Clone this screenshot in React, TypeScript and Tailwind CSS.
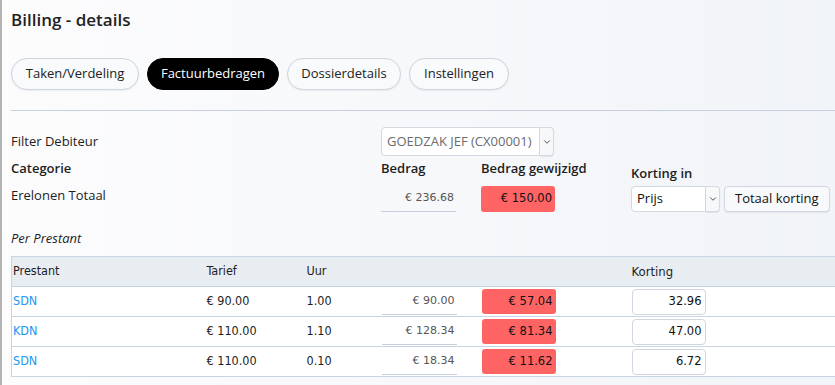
import { ChevronDown } from "lucide-react";

const ui = "font-['Open_Sans',sans-serif]";
const mono = "font-['DejaVu_Sans',sans-serif]";

const tabs = [
  { label: "Taken/Verdeling", w: "w-[128px]" },
  { label: "Factuurbedragen", w: "w-[132px]" },
  { label: "Dossierdetails", w: "w-[114px]" },
  { label: "Instellingen", w: "w-[100px]" },
];

const rows = [
  { who: "SDN", tarief: "€ 90.00", uur: "1.00", bedrag: "€ 90.00", nieuw: "€ 57.04", korting: "32.96" },
  { who: "KDN", tarief: "€ 110.00", uur: "1.10", bedrag: "€ 128.34", nieuw: "€ 81.34", korting: "47.00" },
  { who: "SDN", tarief: "€ 110.00", uur: "0.10", bedrag: "€ 18.34", nieuw: "€ 11.62", korting: "6.72" },
];

const SelectBox = ({ value, className, muted }: { value: string; className?: string; muted?: boolean }) => (
  <div className={`flex h-full ${className ?? ""}`}>
    <div
      className={`flex flex-1 items-center rounded-l-[4px] border border-[#d3d9e1] bg-white pl-[5px] text-[13px] ${
        muted ? "text-[#6b6b6b]" : "text-[#111]"
      }`}
    >
      {value}
    </div>
    <div className="flex w-[14px] items-center justify-center rounded-r-[4px] border border-l-0 border-[#d3d9e1] bg-[#f6f8fa] shadow-[0_1px_1px_rgba(0,0,0,0.08)]">
      <ChevronDown className="size-[10px] text-[#444]" strokeWidth={2.2} />
    </div>
  </div>
);

const AmountField = ({ value, className }: { value: string; className?: string }) => (
  <div
    className={`flex items-center justify-end border-b border-[#c6d0dc] pr-[2px] text-[11px] text-[#555] ${mono} ${className ?? ""}`}
  >
    {value}
  </div>
);

const RedBox = ({ value, className }: { value: string; className?: string }) => (
  <div
    className={`flex items-center justify-end rounded-[3px] bg-[#ff6464] pr-[3px] text-[11.5px] text-[#111] ${mono} ${className ?? ""}`}
  >
    {value}
  </div>
);

const line = "border-[#c8d4e2]";

export default function App() {
  return (
    <div
      className={`min-h-screen w-[835px] overflow-hidden border-l-2 border-[#b3b3b3] bg-linear-to-r from-[#fcfcfd] to-[#f1f4f8] pl-[9px] text-[#1e1e1e] ${ui}`}
    >
      <h1 className="pt-[8px] text-[17px] leading-6 font-semibold text-[#222]">Billing - details</h1>

      <div className="mt-[26px] flex gap-[8px]">
        {tabs.map((t, i) => (
          <div
            key={t.label}
            className={`flex h-[32px] items-center justify-center rounded-full border text-[13px] ${t.w} ${
              i === 1
                ? "border-black bg-black text-white"
                : "border-[#cdd5df] bg-[#f8fafc] text-[#222] shadow-[0_1px_2px_rgba(0,0,0,0.06)]"
            }`}
          >
            {t.label}
          </div>
        ))}
      </div>

      <div className="mt-[20px] border-t border-[#c7d0dc]" />

      <div className="mt-[16px] flex h-[29px] items-center">
        <div className="w-[370px] text-[13px]">Filter Debiteur</div>
        <SelectBox value="GOEDZAK JEF (CX00001)" className="w-[173px]" muted />
      </div>

      <div className="flex">
        <div className="flex w-[370px] flex-col">
          <div className="h-6 text-[13px] leading-6 font-semibold">Categorie</div>
          <div className="mt-[6px] text-[13px] leading-[18px]">Erelonen Totaal</div>
        </div>
        <div className="flex w-[100px] flex-col">
          <div className="h-6 text-[13px] leading-6 font-semibold">Bedrag</div>
          <AmountField value="€ 236.68" className="mt-[5px] h-[27px] w-[75px]" />
        </div>
        <div className="flex w-[150px] flex-col">
          <div className="h-6 text-[13px] leading-6 font-semibold">Bedrag gewijzigd</div>
          <RedBox value="€ 150.00" className="mt-[6px] h-[26px] w-[74px]" />
        </div>
        <div className="flex flex-col">
          <div className="mt-[5px] h-6 text-[13px] leading-6 font-semibold">Korting in</div>
          <div className="mt-[1px] flex h-[26px] gap-[4px]">
            <SelectBox value="Prijs" className="w-[89px]" />
            <div className="flex items-center rounded-[4px] border border-[#d0d7e0] bg-[#f7f9fb] px-[10px] text-[13px] text-[#111] shadow-[0_1px_1px_rgba(0,0,0,0.06)]">
              Totaal korting
            </div>
          </div>
        </div>
      </div>

      <div className="mt-[17px] text-[13px] leading-[18px] italic">Per Prestant</div>

      <table className={`mt-[9px] w-[840px] border-collapse text-[12.5px] text-[#1e1e1e] ${mono} font-stretch-condensed`}>
        <thead>
          <tr className="h-[30px] bg-[#e8edf2] text-left">
            <th className={`w-[195px] border-y border-l ${line} pl-[1px] font-normal`}>Prestant</th>
            <th className={`w-[100px] border-y ${line} font-normal`}>Tarief</th>
            <th className={`w-[75px] border-y ${line} font-normal`}>Uur</th>
            <th className={`w-[100px] border-y ${line} font-normal`} />
            <th className={`w-[150px] border-y ${line} font-normal`} />
            <th className={`border-y ${line} text-[13px] font-normal`}>Korting</th>
          </tr>
        </thead>
        <tbody>
          {rows.map((r, i) => (
            <tr key={i} className="h-[30px] bg-white">
              <td className={`border-b border-l ${line} pl-[1px] text-[#2196f3]`}>{r.who}</td>
              <td className={`border-b ${line}`}>{r.tarief}</td>
              <td className={`border-b ${line}`}>{r.uur}</td>
              <td className={`border-b ${line} font-stretch-normal`}>
                <AmountField value={r.bedrag} className="h-[27px] w-[75px]" />
              </td>
              <td className={`border-b ${line} font-stretch-normal`}>
                <RedBox value={r.nieuw} className="h-[25px] w-[74px]" />
              </td>
              <td className={`border-b ${line} font-stretch-normal`}>
                <div
                  className={`flex h-[26px] w-[74px] items-center justify-end rounded-[4px] border border-[#cfd6df] bg-white pr-[3px] text-[11.5px] text-[#111] ${mono}`}
                >
                  {r.korting}
                </div>
              </td>
            </tr>
          ))}
        </tbody>
      </table>
    </div>
  );
}
